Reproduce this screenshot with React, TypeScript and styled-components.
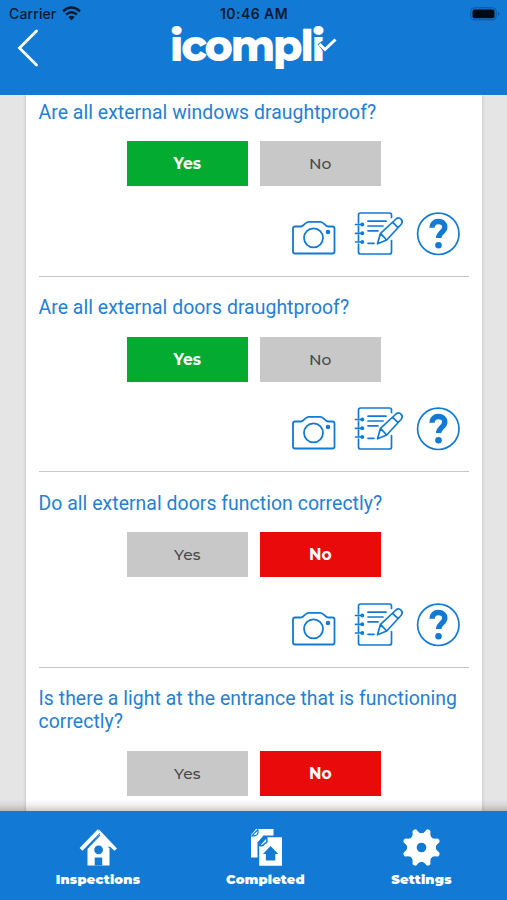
import React from "react";
import styled, { createGlobalStyle } from "styled-components";

const BLUE = "#127ad5";

const GlobalStyle = createGlobalStyle`
  * { box-sizing: border-box; }
  body { margin: 0; background: #e5e5e5; }
  button { font: inherit; border: 0; padding: 0; background: none; }
`;

const Screen = styled.div`
  display: flex;
  flex-direction: column;
  width: 507px;
  height: 900px;
  overflow: hidden;
  background: #e5e5e5;
`;

const Header = styled.header`
  flex: none;
  height: 95px;
  background: ${BLUE};
`;

const StatusBar = styled.div`
  display: grid;
  grid-template-columns: 1fr auto 1fr;
  align-items: center;
  height: 25px;
  padding: 2px 6px 0 9px;
  color: #061a30;
  font: 500 14px/20px Inter, sans-serif;
`;

const Carrier = styled.div`
  display: flex;
  align-items: center;
  gap: 6px;
  letter-spacing: 0.12px;
`;

const Clock = styled.div`
  margin-right: 2px;
  font-weight: 600;
  font-size: 14px;
  line-height: 16px;
  letter-spacing: 0.45px;
`;

const Battery = styled.div`
  display: flex;
  justify-content: flex-end;
`;

const TitleBar = styled.div`
  display: grid;
  grid-template-columns: 170px auto 1fr;
  height: 70px;
`;

const BackButton = styled.button`
  width: 40px;
  height: 45px;
  margin-left: 8px;
`;

const Logo = styled.div`
  position: relative;
  width: 168px;
  height: 50px;
  color: #fff;
  font: 800 42.5px/42px Montserrat, Lato, sans-serif;
  letter-spacing: -2.1px;
  white-space: nowrap;
`;

const LogoTick = styled.svg`
  position: absolute;
  left: 141px;
  top: 5px;
`;

const Content = styled.main`
  position: relative;
  flex: 1;
  min-height: 0;
  overflow: hidden;
`;

const Card = styled.div`
  width: 456px;
  height: 760px;
  margin-left: 26px;
  padding: 5.5px 13px 0 12.5px;
  background: #fff;
  box-shadow: 0 0 4px rgba(0, 0, 0, 0.16);
`;

const Item = styled.section`
  height: 195.5px;
`;

const Question = styled.h2`
  margin: 0;
  color: #2580d3;
  font: 400 19.4px/23px Roboto, sans-serif;
  letter-spacing: 0.05px;
`;

const Answers = styled.div`
  display: flex;
  justify-content: center;
  gap: 12.5px;
  margin-top: 17.9px;
`;

const Answer = styled.button<{ $tone?: "yes" | "no" }>`
  && {
    width: 120.5px;
    height: 45px;
    background: ${({ $tone }) => ($tone === "yes" ? "#03ab31" : $tone === "no" ? "#e90b0c" : "#c8c8c8")};
    color: ${({ $tone }) => ($tone ? "#fff" : "#4a4a4a")};
    font: ${({ $tone }) => ($tone ? 700 : 500)} 15.5px/45px Montserrat, Inter, sans-serif;
    text-align: center;
  }
`;

const Tools = styled.div`
  display: flex;
  justify-content: flex-end;
  height: 90.6px;
  padding: 25.4px 8px 0 0;
  border-bottom: 1px solid #c6c6c6;
`;

const FooterShade = styled.div`
  position: absolute;
  inset: auto 0 0;
  height: 12px;
  background: linear-gradient(rgba(0, 0, 0, 0), rgba(0, 0, 0, 0.06) 50%, rgba(0, 0, 0, 0.2));
`;

const Footer = styled.nav`
  display: flex;
  flex: none;
  height: 89px;
  padding: 16px 0 0 12px;
  background: ${BLUE};
`;

const Tab = styled.button<{ $width: number }>`
  && {
    display: flex;
    flex-direction: column;
    align-items: center;
    width: ${({ $width }) => $width}px;
    color: #fff;
    font: 900 13px/18px Montserrat, Inter, sans-serif;
    letter-spacing: 0.2px;
  }
`;

const TabLabel = styled.span`
  margin-top: 3px;
`;

const WifiIcon = () => (
  <svg width="19" height="15" viewBox="0 0 19 15" fill="none" stroke="#061a30" strokeWidth="2.5">
    <path d="M1 5.2Q9.5-2.2 18 5.2M4 8.5q5.5-4.4 11 0" />
    <path d="m6.4 11 3.1 3.5 3.1-3.5q-3.1-2.5-6.2 0Z" fill="#061a30" stroke="none" />
  </svg>
);

const BatteryIcon = () => (
  <svg width="31" height="14" viewBox="0 0 31 14" fill="none">
    <rect x=".8" y=".8" width="25.4" height="12" rx="3.5" stroke="#0b569b" />
    <rect x="2.5" y="2.5" width="22" height="8.7" rx="2" fill="#000a14" />
    <path d="M28 5v3.7q3-1.8 0-3.7Z" fill="#0b569b" />
  </svg>
);

const CameraIcon = () => (
  <svg width="62" height="46" viewBox="0 0 62 46" fill="none" stroke={BLUE} strokeWidth="1.8">
    <path d="M3 14.5q-2 0-2 2v23q0 2 2 2h37.5q2 0 2-2v-23q0-2-2-2H36c-2.8 0-4.5-4.7-7.5-4.7H16.4c-3 0-4.6 4.7-7.4 4.7Z" />
    <circle cx="21.5" cy="25.800" r="9.5" />
    <circle cx="36" cy="20" r="1.4" fill={BLUE} />
  </svg>
);

const NotesIcon = () => (
  <svg width="62" height="46" viewBox="0 0 62 46" fill="none" stroke={BLUE} strokeWidth="1.7" strokeLinecap="round">
    <path d="M37.5 5.5V3q0-2-2-2H6.5q-2 0-2 2v8M4.5 14v6M4.5 23v6M4.5 32v8q0 2 2 2h29q2 0 2-2V28.5" />
    <path d="M1.5 12.5H8M1.5 21.3H8M1.5 30H8M14 9.2h18M14 14h15M14 18.8h10M14 31.3h6" />
    <path d="m23.5 31.8 3-10.5L42 7q2.6-2.2 5 .2t.2 5L32.7 28ZM38.5 10.2l5.500 5.500M26.500 21.300l6.200 6.700" strokeLinejoin="round" />
    <circle cx="8.3" cy="12.5" r="1.1" fill={BLUE} />
    <circle cx="8.3" cy="21.3" r="1.1" fill={BLUE} />
    <circle cx="8.3" cy="30" r="1.1" fill={BLUE} />
  </svg>
);

const HelpIcon = () => (
  <svg width="45" height="46" viewBox="0 0 45 46" fill="none" stroke={BLUE}>
    <circle cx="22.3" cy="21.8" r="20.7" strokeWidth="1.7" />
    <path d="M16 15.700c0-4 2.700-6.200 6.300-6.200 4 0 6.500 2.200 6.500 5.500 0 5-6.200 5.800-6.200 11" strokeWidth="5.4" />
    <circle cx="22.5" cy="33.2" r="3.3" fill={BLUE} stroke="none" />
  </svg>
);

const HouseIcon = () => (
  <svg width="39" height="40" viewBox="0 0 39 40">
    <path d="M8.5 38.5V21.5L19.5 10 30.5 21.5v17Z" fill="#fff" />
    <path d="m19.5 2 18.5 19.5-2.5 2.300-4.500-4H10l11-13Z" fill="#fff" />
    <path d="M2 22.3 20 3.8" stroke="#fff" strokeWidth="4" />
    <path d="M5.5 24 21 8.2" stroke={BLUE} strokeWidth="1.2" />
    <circle cx="19.6" cy="22.800" r="4.4" fill={BLUE} />
    <path d="M15.7 30.500h7.500v8h-7.500Z" fill={BLUE} />
  </svg>
);

const DocumentsIcon = () => (
  <svg width="39" height="40" viewBox="0 0 39 40">
    <path d="M10 2h17.5v28.5H5V8Z" fill="#fff" />
    <path d="m5.8 8.8 6-6q1.500 6.500-6 6Z" fill="#fff" stroke={BLUE} strokeWidth="1.2" />
    <path d="M17.5 8.5H38V40H11.5V15.5Z" fill={BLUE} />
    <path d="M20.5 10.2H36v28.600H13.200V18Z" fill="#fff" />
    <path d="m13.5 18.2 7-8q1.500 6-1.500 6-2 3.500-5.500 2Z" fill="#fff" stroke={BLUE} strokeWidth="1.5" />
    <path d="m24.6 19 7.700 8h-3v6.500h-9.400V27h-3Z" fill={BLUE} />
  </svg>
);

const GearIcon = () => (
  <svg width="39" height="40" viewBox="0 0 39 40">
    <g fill="#fff">
      <circle cx="19.5" cy="20.5" r="14" />
      {[22.5, 67.5, 112.5, 157.5, 202.5, 247.5, 292.5, 337.5].map((angle) => (
        <path
          key={angle}
          d="M12.500 8.500q3.700-1.500 4.600-5.700.3-1.600 2.400-1.600t2.400 1.600q.9 4.200 4.600 5.700Z"
          transform={`rotate(${angle} 19.5 20.5)`}
        />
      ))}
    </g>
    <circle cx="19.5" cy="20.5" r="4.8" fill={BLUE} />
  </svg>
);

const questions: { text: string; answer: "yes" | "no" }[] = [
  { text: "Are all external windows draughtproof?", answer: "yes" },
  { text: "Are all external doors draughtproof?", answer: "yes" },
  { text: "Do all external doors function correctly?", answer: "no" },
  { text: "Is there a light at the entrance that is functioning correctly?", answer: "no" },
];

export default function App() {
  return (
    <Screen>
      <GlobalStyle />
      <Header>
        <StatusBar>
          <Carrier>
            Carrier
            <WifiIcon />
          </Carrier>
          <Clock>10:46 AM</Clock>
          <Battery>
            <BatteryIcon />
          </Battery>
        </StatusBar>
        <TitleBar>
          <BackButton aria-label="Back">
            <svg width="40" height="45" viewBox="0 0 40 45" fill="none" stroke="#fff" strokeWidth="2.8" strokeLinecap="round">
              <path d="M28.500 6 11.500 23l17 17" />
            </svg>
          </BackButton>
          <Logo>
            icompli
            <LogoTick width="28" height="28" viewBox="0 0 28 28" fill="none">
              <path d="m9 12.500 5.500 7L25 9" stroke={BLUE} strokeWidth="6" />
              <path d="m8.500 14 5.500 5.500L24.500 9.500" stroke="#fff" strokeWidth="3" />
            </LogoTick>
          </Logo>
        </TitleBar>
      </Header>
      <Content>
        <Card>
          {questions.map(({ text, answer }) => (
            <Item key={text}>
              <Question>{text}</Question>
              <Answers>
                <Answer $tone={answer === "yes" ? "yes" : undefined}>Yes</Answer>
                <Answer $tone={answer === "no" ? "no" : undefined}>No</Answer>
              </Answers>
              <Tools>
                <CameraIcon />
                <NotesIcon />
                <HelpIcon />
              </Tools>
            </Item>
          ))}
        </Card>
        <FooterShade />
      </Content>
      <Footer>
        <Tab $width={172}>
          <HouseIcon />
          <TabLabel>Inspections</TabLabel>
        </Tab>
        <Tab $width={163}>
          <DocumentsIcon />
          <TabLabel>Completed</TabLabel>
        </Tab>
        <Tab $width={149}>
          <GearIcon />
          <TabLabel>Settings</TabLabel>
        </Tab>
      </Footer>
    </Screen>
  );
}
